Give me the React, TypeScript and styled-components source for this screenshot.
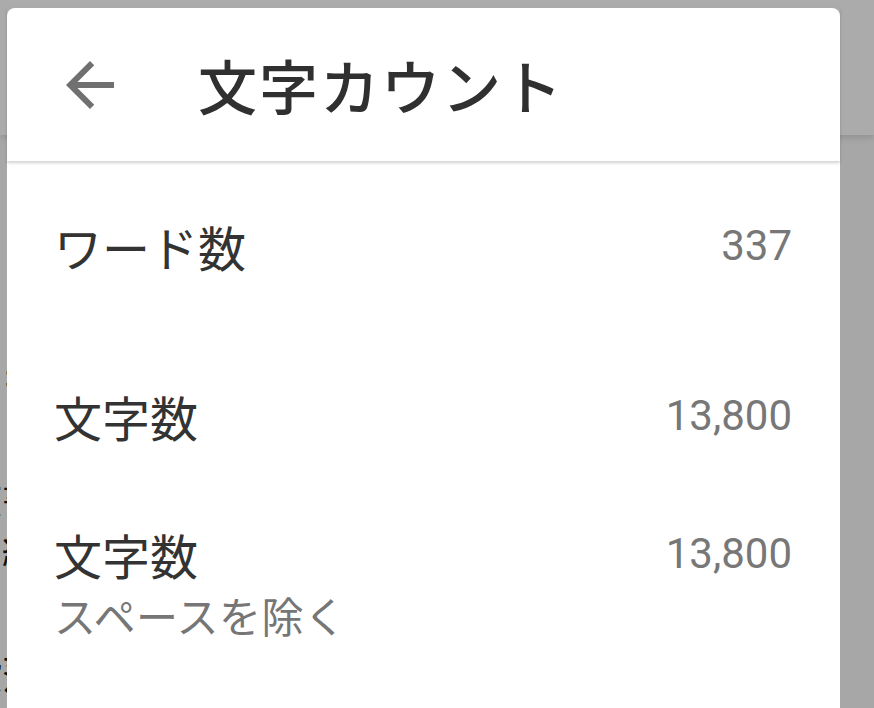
import React from "react";
import styled, { createGlobalStyle } from "styled-components";

const Global = createGlobalStyle`
  html, body { margin: 0; padding: 0; }
  body {
    width: 874px;
    height: 708px;
    overflow: hidden;
    font-family: "Noto Sans CJK JP", "Noto Sans", Roboto, sans-serif;
    background: #a8a8a8;
  }
`;

const Screen = styled.div`
  position: relative;
  width: 874px;
  height: 708px;
  overflow: hidden;
  background: #a7a7a7;
`;

const AppBar = styled.div`
  height: 135px;
  background: #ababab;
  box-shadow: 0 3px 6px rgba(0, 0, 0, 0.12);
`;

const PageBody = styled.div`
  display: flex;
  flex-direction: column;
  margin-left: -38px;
`;

const PageLine = styled.div<{ $mt: number }>`
  margin-top: ${(p) => p.$mt}px;
  font-size: 40px;
  line-height: 48px;
  color: #111;
  white-space: nowrap;
`;

const Dialog = styled.div`
  position: absolute;
  left: 7px;
  top: 8px;
  right: 34px;
  bottom: 0;
  background: #ffffff;
  border-radius: 8px 8px 0 0;
  display: flex;
  flex-direction: column;
`;

const Header = styled.header`
  height: 153px;
  flex: none;
  display: flex;
  align-items: center;
  padding-left: 47px;
  box-shadow: 0 2px 3px rgba(0, 0, 0, 0.18);
  position: relative;
  z-index: 1;
`;

const BackButton = styled.button`
  width: 72px;
  height: 72px;
  padding: 0;
  border: none;
  background: none;
  display: flex;
  align-items: center;
  justify-content: center;
  margin-right: 72px;
  color: #707070;
`;

const Title = styled.h1`
  margin: 0;
  font-size: 59px;
  font-weight: 500;
  line-height: 1;
  color: #303030;
  letter-spacing: 2px;
`;

const List = styled.div`
  display: flex;
  flex-direction: column;
  padding: 0 48px 0 47px;
`;

const Row = styled.div<{ $h: number; $top?: boolean; $pt?: number }>`
  height: ${(p) => p.$h}px;
  display: flex;
  justify-content: space-between;
  align-items: ${(p) => (p.$top ? "flex-start" : "center")};
  padding-top: ${(p) => p.$pt ?? 0}px;
  box-sizing: border-box;
`;

const LabelGroup = styled.div`
  display: flex;
  flex-direction: column;
`;

const Label = styled.div`
  font-size: 48px;
  line-height: 62px;
  color: #333333;
`;

const SubLabel = styled.div`
  font-size: 42px;
  line-height: 60px;
  letter-spacing: 0.5px;
  color: #767676;
`;

const Value = styled.div`
  font-family: Roboto, "Noto Sans", sans-serif;
  font-size: 42px;
  line-height: 62px;
  color: #777777;
`;

const ArrowIcon = () => (
  <svg width="72" height="72" viewBox="0 0 24 24" fill="currentColor">
    <path d="M20 11H7.83l5.59-5.59L12 4l-8 8 8 8 1.41-1.41L7.83 13H20v-2z" />
  </svg>
);

export default function App() {
  return (
    <>
      <Global />
      <Screen>
        <AppBar />
        <PageBody>
          <PageLine $mt={218}>テキストの行</PageLine>
          <PageLine $mt={72}>文書の本文</PageLine>
          <PageLine $mt={4}>を編集する</PageLine>
          <PageLine $mt={75}>段落の内容</PageLine>
        </PageBody>
        <Dialog>
          <Header>
            <BackButton aria-label="戻る">
              <ArrowIcon />
            </BackButton>
            <Title>文字カウント</Title>
          </Header>
          <List>
            <Row $h={170}>
              <Label>ワード数</Label>
              <Value>337</Value>
            </Row>
            <Row $h={170}>
              <Label>文字数</Label>
              <Value>13,800</Value>
            </Row>
            <Row $h={200} $top $pt={22}>
              <LabelGroup>
                <Label>文字数</Label>
                <SubLabel>スペースを除く</SubLabel>
              </LabelGroup>
              <Value>13,800</Value>
            </Row>
          </List>
        </Dialog>
      </Screen>
    </>
  );
}
